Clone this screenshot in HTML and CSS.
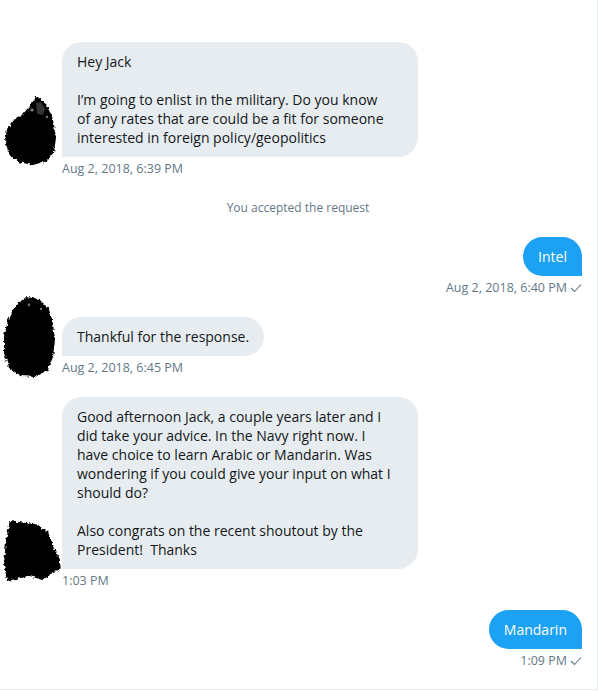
FILE: index.html
```html
<!DOCTYPE html>
<html>
<head>
<meta charset="utf-8">
<link rel="stylesheet" href="styles.css">
</head>
<body>
<svg class="defs" width="0" height="0">
  <defs>
    <filter id="rough" x="-15%" y="-15%" width="130%" height="130%">
      <feTurbulence type="fractalNoise" baseFrequency="0.35" numOctaves="2" seed="4" result="n"/>
      <feDisplacementMap in="SourceGraphic" in2="n" scale="5" xChannelSelector="R" yChannelSelector="G" result="d"/>
      <feGaussianBlur in="d" stdDeviation="0.7"/>
    </filter>
  </defs>
</svg>
<div class="convo">
  <div class="row recv">
    <div class="avatar-col">
      <svg class="av av1" width="56" height="74" viewBox="0 0 56 74">
        <path filter="url(#rough)" fill="#000" d="M35 3 L43 10 L49 21 L52 31 L54 45 L52 59 L45 68 L31 72 L16 69 L7 61 L3 49 L5 36 L12 27 L20 22 L27 14 Z"/>
        <path fill="#555" opacity="0.6" d="M34 10 L39 9 L43 16 L41 22 L35 21 Z"/>
        <circle cx="30" cy="17" r="1.5" fill="#888"/>
        <circle cx="45" cy="24" r="1.2" fill="#777"/>
      </svg>
    </div>
    <div class="group">
      <div class="bubble grey wide">Hey Jack<br><br>I’m going to enlist in the military. Do you know<br>of any rates that are could be a fit for someone<br>interested in foreign policy/geopolitics</div>
      <div class="meta">Aug 2, 2018, 6:39 PM</div>
    </div>
  </div>

  <div class="system">You accepted the request</div>

  <div class="row sent">
    <div class="group right">
      <div class="bubble blue">Intel</div>
      <div class="meta">Aug 2, 2018, 6:40 PM <svg class="check" width="12" height="10" viewBox="0 0 12 10"><path d="M1 5 L4.5 8.5 L11 1.5" fill="none" stroke="#657786" stroke-width="1.1"/></svg></div>
    </div>
  </div>

  <div class="row recv spaced">
    <div class="avatar-col">
      <svg class="av av2" width="56" height="84" viewBox="0 0 56 84">
        <path filter="url(#rough)" fill="#000" d="M25 2 L38 4 L48 14 L52 28 L54 45 L52 62 L46 76 L34 82 L20 81 L8 73 L3 58 L3 40 L8 22 L15 10 Z"/>
        <circle cx="28" cy="10" r="1.4" fill="#666"/>
        <circle cx="40" cy="14" r="1.2" fill="#777"/>
      </svg>
    </div>
    <div class="group">
      <div class="bubble grey">Thankful for the response.</div>
      <div class="meta">Aug 2, 2018, 6:45 PM</div>
    </div>
  </div>

  <div class="row recv spaced">
    <div class="avatar-col">
      <svg class="av av3" width="62" height="66" viewBox="0 0 62 66">
        <path filter="url(#rough)" fill="#000" d="M9 3 L34 6 L47 14 L50 22 L57 38 L60 50 L50 57 L41 62 L29 58 L6 63 L3 46 L5 22 Z"/>
      </svg>
    </div>
    <div class="group">
      <div class="bubble grey wide">Good afternoon Jack, a couple years later and I<br>did take your advice. In the Navy right now. I<br>have choice to learn Arabic or Mandarin. Was<br>wondering if you could give your input on what I<br>should do?<br><br>Also congrats on the recent shoutout by the<br>President!&nbsp; Thanks</div>
      <div class="meta">1:03 PM</div>
    </div>
  </div>

  <div class="row sent">
    <div class="group right">
      <div class="bubble blue">Mandarin</div>
      <div class="meta">1:09 PM <svg class="check" width="12" height="10" viewBox="0 0 12 10"><path d="M1 5 L4.5 8.5 L11 1.5" fill="none" stroke="#657786" stroke-width="1.1"/></svg></div>
    </div>
  </div>
</div>
</body>
</html>
```

FILE: styles.css
```css
html, body {
  margin: 0;
  padding: 0;
  background: #fff;
}
body {
  font-family: "Open Sans", "Noto Sans", sans-serif;
  width: 598px;
  height: 692px;
  overflow: hidden;
}
.defs {
  position: absolute;
  width: 0;
  height: 0;
}
.convo {
  box-sizing: border-box;
  width: 598px;
  height: 690px;
  border-right: 1px solid #e6ecf0;
  border-bottom: 1px solid #e6ecf0;
  padding: 42px 15px 0 0;
  display: flex;
  flex-direction: column;
}
.row {
  display: flex;
  align-items: flex-end;
}
.row.sent {
  justify-content: flex-end;
  margin-top: 21px;
}
.row.spaced {
  margin-top: 21px;
}
.avatar-col {
  width: 62px;
  height: 0;
  flex: none;
  align-self: flex-end;
  display: flex;
  align-items: flex-end;
}
.av {
  display: block;
  flex: none;
  overflow: visible;
}
.av1 { margin-left: 2px; margin-bottom: 10px; }
.av2 { margin-left: 1px; margin-bottom: -3px; }
.av3 { margin-left: 1px; margin-bottom: 5px; }
.group {
  display: flex;
  flex-direction: column;
  align-items: flex-start;
}
.group.right {
  align-items: flex-end;
}
.bubble {
  max-width: 326px;
  padding: 10px 15px;
  font-size: 14px;
  line-height: 19px;
  border-radius: 20px;
}
.bubble.wide {
  width: 326px;
}
.bubble.grey {
  background: #e6ecf0;
  color: #14171a;
  border-bottom-left-radius: 0;
}
.bubble.blue {
  background: #1da1f2;
  color: #fff;
  border-bottom-right-radius: 0;
}
.meta {
  margin-top: 4px;
  font-size: 12.5px;
  line-height: 16px;
  color: #657786;
  display: flex;
  align-items: center;
  gap: 3px;
}
.check {
  display: block;
}
.system {
  margin-top: 23px;
  text-align: center;
  font-size: 12px;
  line-height: 16px;
  color: #657786;
  padding-left: 14px;
}
```
